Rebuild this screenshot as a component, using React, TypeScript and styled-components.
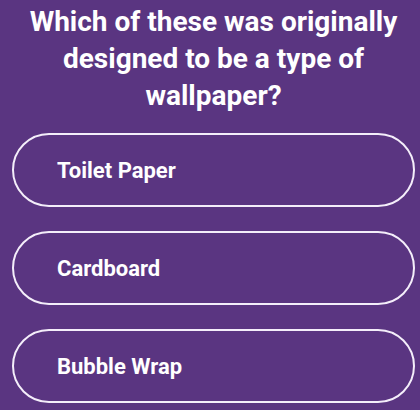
import React from "react";
import styled, { createGlobalStyle } from "styled-components";

const Global = createGlobalStyle`
  html, body { margin: 0; padding: 0; background: #5a3581; }
  body { font-family: Roboto, "Noto Sans", sans-serif; }
`;

const Page = styled.div`
  width: 420px;
  height: 410px;
  background: #5a3581;
  box-sizing: border-box;
  padding: 3px 5px 0 12px;
  display: flex;
  flex-direction: column;
  overflow: hidden;
`;

const Question = styled.h1`
  margin: 0;
  padding: 0 2px;
  color: #ffffff;
  font-size: 28px;
  line-height: 37px;
  font-weight: 700;
  text-align: center;
`;

const Options = styled.div`
  margin-top: 19px;
  display: flex;
  flex-direction: column;
  gap: 24px;
`;

const Option = styled.button`
  height: 74px;
  border: 2px solid #f4eefa;
  border-radius: 37px;
  background: transparent;
  color: #ffffff;
  font-family: Roboto, "Noto Sans", sans-serif;
  font-size: 22px;
  font-weight: 700;
  text-align: left;
  padding: 0 0 0 43px;
  display: flex;
  align-items: center;
  cursor: pointer;
`;

const options = ["Toilet Paper", "Cardboard", "Bubble Wrap"];

export default function App() {
  return (
    <>
      <Global />
      <Page>
        <Question>Which of these was originally designed to be a type of wallpaper?</Question>
        <Options>
          {options.map((o) => (
            <Option key={o}>{o}</Option>
          ))}
        </Options>
      </Page>
    </>
  );
}
